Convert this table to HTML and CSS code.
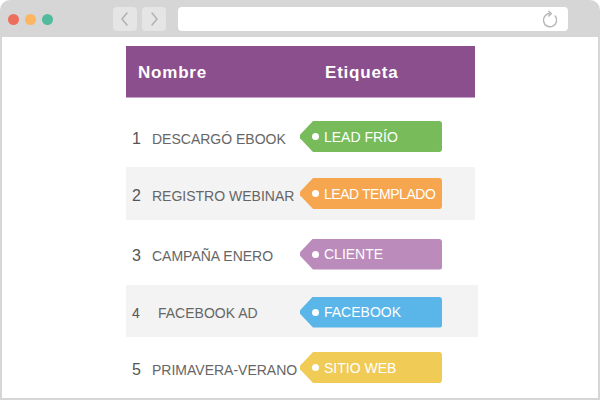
FILE: index.html
```html
<!DOCTYPE html>
<html>
<head>
<meta charset="utf-8">
<link rel="stylesheet" href="styles.css">
</head>
<body>
<div class="window">
  <div class="toolbar">
    <div class="dots">
      <span class="dot dot-red"></span>
      <span class="dot dot-orange"></span>
      <span class="dot dot-green"></span>
    </div>
    <div class="nav">
      <span class="nav-btn"><svg width="24" height="24" viewBox="0 0 24 24"><path d="M14 6 L9 12 L14 18" fill="none" stroke="#b3b3b3" stroke-width="1.6" stroke-linecap="round" stroke-linejoin="round"/></svg></span>
      <span class="nav-btn"><svg width="24" height="24" viewBox="0 0 24 24"><path d="M10 6 L15 12 L10 18" fill="none" stroke="#b3b3b3" stroke-width="1.6" stroke-linecap="round" stroke-linejoin="round"/></svg></span>
    </div>
    <div class="url">
      <svg class="reload" width="20" height="20" viewBox="0 0 20 20"><path d="M14.2 7 A6.6 6.6 0 1 1 9.6 4.6" fill="none" stroke="#b8b8b8" stroke-width="1.5" stroke-linecap="round"/><path d="M7.8 2.2 L10.2 4.6 L7.8 7" fill="none" stroke="#b8b8b8" stroke-width="1.5" stroke-linecap="round" stroke-linejoin="round"/></svg>
    </div>
  </div>
  <div class="content">
    <div class="table">
      <div class="head">
        <span class="head-name">Nombre</span>
        <span class="head-tag">Etiqueta</span>
      </div>
      <div class="row r1">
        <span class="num">1</span>
        <span class="name">DESCARGÓ EBOOK</span>
        <span class="tag tag-green"><i class="tag-dot"></i>LEAD FRÍO</span>
      </div>
      <div class="row r2 alt">
        <span class="num">2</span>
        <span class="name">REGISTRO WEBINAR</span>
        <span class="tag tag-orange tag-tight"><i class="tag-dot"></i>LEAD TEMPLADO</span>
      </div>
      <div class="row r3">
        <span class="num">3</span>
        <span class="name">CAMPAÑA ENERO</span>
        <span class="tag tag-purple"><i class="tag-dot"></i>CLIENTE</span>
      </div>
      <div class="row r4 alt">
        <span class="num num-small">4</span>
        <span class="name name-indent">FACEBOOK AD</span>
        <span class="tag tag-blue"><i class="tag-dot"></i>FACEBOOK</span>
      </div>
      <div class="row r5">
        <span class="num">5</span>
        <span class="name">PRIMAVERA-VERANO</span>
        <span class="tag tag-yellow"><i class="tag-dot"></i>SITIO WEB</span>
      </div>
    </div>
  </div>
</div>
</body>
</html>
```

FILE: styles.css
```css
* { box-sizing: border-box; }
html, body { margin: 0; padding: 0; background: #fff; }
body { font-family: "Liberation Sans", Arial, sans-serif; }

.window {
  width: 600px;
  height: 400px;
  background: #d6d6d6;
  border-radius: 10px 10px 0 0;
  display: flex;
  flex-direction: column;
  overflow: hidden;
}

.toolbar {
  height: 37px;
  flex: none;
  display: flex;
  align-items: center;
  padding: 1px 0 0 8px;
}
.dots { display: flex; gap: 6px; }
.dot { width: 11px; height: 11px; border-radius: 50%; display: block; }
.dot-red { background: #ee6e5c; }
.dot-orange { background: #fcb560; }
.dot-green { background: #52bb9b; }

.nav { display: flex; gap: 5px; margin-left: 60px; }
.nav-btn {
  width: 24px; height: 24px;
  background: #e5e5e5;
  border-radius: 4px;
  display: block;
}
.nav-btn svg { display: block; }

.url {
  margin-left: 12px;
  width: 390px;
  height: 24px;
  background: #fff;
  border-radius: 4px;
  display: flex;
  align-items: center;
  justify-content: flex-end;
  padding-right: 7px;
}
.reload { display: block; }

.content {
  flex: 1;
  margin: 0 2px 2px;
  background: #fff;
  overflow: hidden;
  padding-top: 9px;
}

.table { margin-left: 124px; width: 349px; }

.head {
  height: 52px;
  background: #8b4f8e;
  border-bottom: 1px solid #c7a3ca;
  display: grid;
  grid-template-columns: 187px 1fr;
  align-items: center;
  padding: 3px 0 0 12px;
  color: #fff;
  font-weight: bold;
  font-size: 17px;
  letter-spacing: 0.8px;
}

.row {
  display: grid;
  grid-template-columns: 20px 148px 142px;
  align-items: center;
  padding-left: 6px;
  color: #666;
  font-size: 14px;
}
.alt { background: #f3f3f3; }
.r1 { height: 69px; padding-top: 8px; }
.r2 { height: 53px; }
.r3 { height: 65px; padding-top: 3px; }
.r4 { height: 52px; padding-top: 2px; margin-right: -3px; }
.r5 { height: 61px; }

.num { font-size: 16px; color: #555; padding-top: 4px; }
.num-small { font-size: 14px; padding-top: 2px; }
.name { padding-top: 4px; white-space: nowrap; }
.name-indent { padding-left: 6px; padding-top: 2px; }

.tag {
  width: 142px;
  height: 31px;
  display: flex;
  align-items: center;
  padding-left: 12px;
  color: #fff;
  font-size: 14px;
  white-space: nowrap;
  border-radius: 0 3px 3px 0;
  clip-path: polygon(13px 0, 100% 0, 100% 100%, 13px 100%, 0 56%, 0 44%);
}
.tag-tight { letter-spacing: -0.45px; }
.tag-dot {
  width: 7px; height: 7px;
  border-radius: 50%;
  background: #fff;
  display: block;
  margin-right: 5px;
  flex: none;
}
.tag-green { background: #77bb5a; }
.tag-orange { background: #f6a64f; }
.tag-purple { background: #bb8bbc; }
.tag-blue { background: #5ab6e8; }
.tag-yellow { background: #f0cb56; }
```
